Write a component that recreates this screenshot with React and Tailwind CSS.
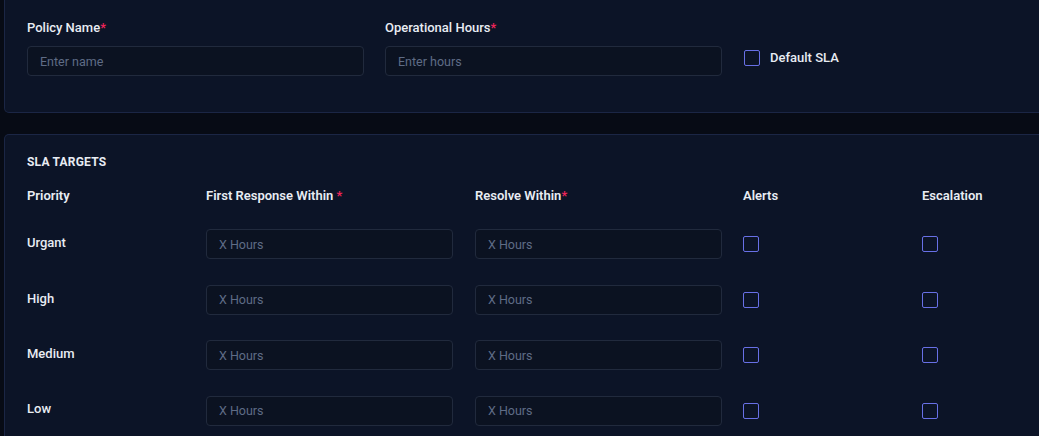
import { useState } from 'react'

const rows = ['Urgant', 'High', 'Medium', 'Low']

const Req = () => <span className="text-[#f0245a]">*</span>

const Box = ({ checked, onChange }) => (
  <button
    type="button"
    onClick={onChange}
    className={`w-4 h-4 rounded-[2px] border-[1.5px] border-[#6870e6] ${checked ? 'bg-[#6870e6]' : 'bg-transparent'}`}
  />
)

const Field = ({ placeholder, className = '' }) => (
  <input
    placeholder={placeholder}
    className={`h-[30px] rounded-[4px] border border-[#212a3d] bg-[#0b1221] px-3 text-[12.5px] text-[#e5e9f0] placeholder:text-[#5f6c86] outline-none ${className}`}
  />
)

export default function App() {
  const [defaultSla, setDefaultSla] = useState(false)
  const [checks, setChecks] = useState({})

  const toggle = (key) => setChecks((prev) => ({ ...prev, [key]: !prev[key] }))

  return (
    <div
      className="min-h-[436px] w-[1039px] overflow-hidden bg-[#070b15] pl-[4px] text-[#e8ecf3]"
      style={{ fontFamily: 'Roboto, "Liberation Sans", sans-serif' }}
    >
      {/* policy details */}
      <div className="w-[1060px] rounded-b-[5px] border-x border-b border-[#1b2645] bg-[#0c1427] pl-[22px] pt-[20px] pb-[36px]">
        <div className="grid grid-cols-[337px_337px_200px] gap-x-[21px]">
          <div>
            <label className="block text-[13px] leading-4 font-medium mb-[10px]">
              Policy Name<Req />
            </label>
            <Field placeholder="Enter name" className="w-full" />
          </div>
          <div>
            <label className="block text-[13px] leading-4 font-medium mb-[10px]">
              Operational Hours<Req />
            </label>
            <Field placeholder="Enter hours" className="w-full" />
          </div>
          <div className="flex items-center gap-[10px] pt-[20px] pl-px">
            <Box checked={defaultSla} onChange={() => setDefaultSla(!defaultSla)} />
            <span className="text-[13px] font-medium">Default SLA</span>
          </div>
        </div>
      </div>

      {/* sla targets */}
      <div className="mt-[21px] w-[1060px] rounded-t-[5px] border-x border-t border-[#1b2645] bg-[#0c1427] pl-[22px] pt-[19px] pb-6">
        <h2 className="text-[12px] leading-4 font-bold tracking-[0.2px] mb-[18px]">SLA TARGETS</h2>
        <div className="grid grid-cols-[179px_269px_268px_179px_179px] gap-y-[25.4px] items-center">
          <div className="text-[13px] leading-4 font-semibold">Priority</div>
          <div className="text-[13px] leading-4 font-semibold">First Response Within <Req /></div>
          <div className="text-[13px] leading-4 font-semibold">Resolve Within<Req /></div>
          <div className="text-[13px] leading-4 font-semibold">Alerts</div>
          <div className="text-[13px] leading-4 font-semibold">Escalation</div>

          {rows.map((row) => (
            <div key={row} className="contents">
              <div className="text-[13px] font-medium -mt-[3px]">{row}</div>
              <Field placeholder="X Hours" className="w-[247px]" />
              <Field placeholder="X Hours" className="w-[247px]" />
              <div className="flex">
                <Box checked={checks[`${row}-a`]} onChange={() => toggle(`${row}-a`)} />
              </div>
              <div className="flex">
                <Box checked={checks[`${row}-e`]} onChange={() => toggle(`${row}-e`)} />
              </div>
            </div>
          ))}
        </div>
      </div>
    </div>
  )
}
